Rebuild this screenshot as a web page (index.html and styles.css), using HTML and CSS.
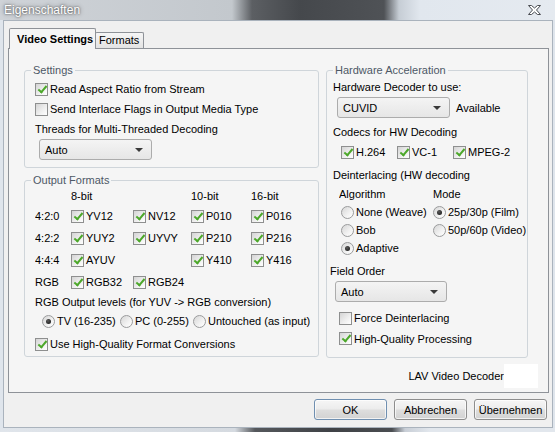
FILE: index.html
```html
<!DOCTYPE html>
<html lang="de">
<head>
<meta charset="utf-8">
<title>Eigenschaften</title>
<link rel="stylesheet" href="styles.css">
</head>
<body>
<div class="window">
  <div class="titlebar">
    <span class="title">Eigenschaften</span>
    <svg class="close" viewBox="0 0 13 10" width="13" height="10"><polygon points="0.5,0.5 3.5,0.5 6.5,3 9.5,0.5 12.5,0.5 8.5,5 12.5,9.5 9.5,9.5 6.5,7 3.5,9.5 0.5,9.5 4.5,5" fill="#fff" stroke="#4a4d52" stroke-width="1" stroke-linejoin="round"/></svg>
  </div>
  <div class="client">
    <div class="tabs">
      <div class="tab active">Video Settings</div>
      <div class="tab">Formats</div>
    </div>
    <div class="panel">
      <div class="cols">
        <div class="col">
          <fieldset class="group">
            <legend>Settings</legend>
            <div class="gbody settings">
              <div class="row"><span class="cb on"></span><span>Read Aspect Ratio from Stream</span></div>
              <div class="row"><span class="cb"></span><span>Send Interlace Flags in Output Media Type</span></div>
              <div class="row threads">Threads for Multi-Threaded Decoding</div>
              <div class="combo threads-combo"><span>Auto</span><span class="arrow"></span></div>
            </div>
          </fieldset>
          <fieldset class="group output">
            <legend>Output Formats</legend>
            <div class="gbody formats">
              <div class="fmt">
                <span></span><span class="cell">8-bit</span><span></span><span class="cell">10-bit</span><span class="cell">16-bit</span>
                <span class="cell">4:2:0</span>
                <span class="cell"><span class="cb on"></span>YV12</span>
                <span class="cell"><span class="cb on"></span>NV12</span>
                <span class="cell"><span class="cb on"></span>P010</span>
                <span class="cell"><span class="cb on"></span>P016</span>
                <span class="cell">4:2:2</span>
                <span class="cell"><span class="cb on"></span>YUY2</span>
                <span class="cell"><span class="cb on"></span>UYVY</span>
                <span class="cell"><span class="cb on"></span>P210</span>
                <span class="cell"><span class="cb on"></span>P216</span>
                <span class="cell">4:4:4</span>
                <span class="cell"><span class="cb on"></span>AYUV</span>
                <span></span>
                <span class="cell"><span class="cb on"></span>Y410</span>
                <span class="cell"><span class="cb on"></span>Y416</span>
                <span class="cell">RGB</span>
                <span class="cell"><span class="cb on"></span>RGB32</span>
                <span class="cell"><span class="cb on"></span>RGB24</span>
                <span></span><span></span>
              </div>
              <div class="row levels">RGB Output levels (for YUV -&gt; RGB conversion)</div>
              <div class="radios">
                <span class="ritem tv"><span class="rb on"></span>TV (16-235)</span>
                <span class="ritem pc"><span class="rb"></span>PC (0-255)</span>
                <span class="ritem"><span class="rb"></span>Untouched (as input)</span>
              </div>
              <div class="row hqconv"><span class="cb on"></span><span>Use High-Quality Format Conversions</span></div>
            </div>
          </fieldset>
        </div>
        <fieldset class="group hw">
          <legend>Hardware Acceleration</legend>
          <div class="gbody hwbody">
            <div class="row">Hardware Decoder to use:</div>
            <div class="decrow"><div class="combo cuvid"><span>CUVID</span><span class="arrow"></span></div><span class="avail">Available</span></div>
            <div class="row codecs-label">Codecs for HW Decoding</div>
            <div class="codecs">
              <span class="cell"><span class="cb on"></span>H.264</span>
              <span class="cell"><span class="cb on"></span>VC-1</span>
              <span class="cell"><span class="cb on"></span>MPEG-2</span>
            </div>
            <div class="row deint">Deinterlacing (HW decoding</div>
            <div class="algrow"><span class="cell">Algorithm</span><span class="cell">Mode</span></div>
            <div class="rrow"><span class="cell"><span class="rb"></span>None (Weave)</span><span class="cell"><span class="rb on"></span>25p/30p (Film)</span></div>
            <div class="rrow"><span class="cell"><span class="rb"></span>Bob</span><span class="cell"><span class="rb"></span>50p/60p (Video)</span></div>
            <div class="rrow"><span class="cell"><span class="rb on"></span>Adaptive</span><span></span></div>
            <div class="row field">Field Order</div>
            <div class="combo fieldcombo"><span>Auto</span><span class="arrow"></span></div>
            <div class="row force"><span class="cb"></span><span>Force Deinterlacing</span></div>
            <div class="row hqproc"><span class="cb on"></span><span>High-Quality Processing</span></div>
          </div>
        </fieldset>
      </div>
      <div class="lavrow"><span>LAV Video Decoder</span><span class="logo"></span></div>
    </div>
    <div class="buttons">
      <span class="btn default">OK</span>
      <span class="btn">Abbrechen</span>
      <span class="btn">Übernehmen</span>
    </div>
  </div>
  <div class="bottom"></div>
</div>
</body>
</html>
```

FILE: styles.css
```css
* { box-sizing: border-box; }
html, body { margin: 0; padding: 0; }
body {
  width: 555px;
  height: 432px;
  overflow: hidden;
  font-family: "Liberation Sans", Arial, sans-serif;
  font-size: 11px;
  color: #000;
  background: #dfe5ec;
}
.window {
  width: 555px;
  height: 432px;
  display: flex;
  flex-direction: column;
}
.titlebar {
  height: 20px;
  flex: none;
  display: flex;
  align-items: center;
  justify-content: space-between;
  padding: 0 14px 0 4px;
  background: linear-gradient(90deg, #cfd3d8 0, #c3c8cd 232px, #5c5f63 252px, #45484c 300px, #4f5256 384px, #c6cdd5 399px, #e1e7ee 420px, #e5eaf0 100%);
}
.title {
  font-size: 12px;
  color: #fff;
  text-shadow: 0 0 2px #4a4a4a, 0 0 5px rgba(0,0,0,0.45);
}
.close { display: block; }
.client {
  margin-left: 3px;
  width: 550px;
  height: 408px;
  flex: none;
  border: 1px solid #aab3bd;
  background: #f0f0f0;
  padding: 7px 3px 0 4px;
}
.bottom {
  flex: 1;
  background: linear-gradient(90deg, #e0e5eb 0, #d5dae0 235px, #55585c 255px, #3f4246 330px, #4a4d51 392px, #c8ced6 405px, #e2e7ed 430px, #e2e7ed 100%);
}
.tabs {
  display: flex;
  align-items: flex-end;
  height: 20px;
  padding-left: 1px;
}
.tab {
  height: 16px;
  border: 1px solid #8e9298;
  border-bottom: none;
  border-radius: 2px 2px 0 0;
  padding: 0 4px 0 3px;
  line-height: 15px;
  background: linear-gradient(#f6f6f6, #e3e3e3);
  margin-left: -1px;
  white-space: nowrap;
}
.tab.active {
  position: relative;
  z-index: 1;
  height: 21px;
  width: 87px;
  margin-left: 0;
  margin-bottom: -1px;
  padding: 0 0 0 7px;
  line-height: 20px;
  font-weight: bold;
  background: #f5f5f5;
}
.panel {
  width: 541px;
  height: 345px;
  border: 1px solid #8e9298;
  background: #f5f5f5;
  padding: 15px 0 0 15px;
}
.cols {
  display: grid;
  grid-template-columns: 295px 202px;
  column-gap: 7px;
  align-items: start;
}
fieldset.group {
  margin: 0;
  padding: 0;
  min-width: 0;
  border: 1px solid #cfd5da;
  border-radius: 3px;
}
fieldset.group.output { margin-top: 6px; }
legend {
  margin-left: 6px;
  padding: 0 2px;
  line-height: 13px;
  color: #4d5866;
}
.row {
  height: 20px;
  display: flex;
  align-items: center;
  white-space: nowrap;
}
.cell {
  display: flex;
  align-items: center;
  white-space: nowrap;
  overflow: hidden;
}
.cb {
  flex: none;
  width: 13px;
  height: 13px;
  border: 1px solid #8e8f8f;
  background: linear-gradient(135deg, #d4d4d4 0%, #eeeeee 55%, #ffffff 100%);
  margin-right: 2px;
}
.cb.on::after {
  content: "";
  display: block;
  width: 3px;
  height: 7px;
  border: solid #4ca82a;
  border-width: 0 2px 2px 0;
  transform: rotate(40deg);
  margin: 0 0 0 4px;
}
.rb {
  flex: none;
  width: 13px;
  height: 13px;
  border-radius: 50%;
  border: 1px solid #9a9b9c;
  background: linear-gradient(135deg, #d6d6d6 0%, #f2f2f2 60%, #ffffff 100%);
  margin-right: 2px;
}
.rb.on::after {
  content: "";
  display: block;
  width: 5px;
  height: 5px;
  margin: 3px;
  border-radius: 50%;
  background: radial-gradient(circle at 40% 35%, #5a5a5a, #111);
}
.combo {
  display: flex;
  align-items: center;
  justify-content: space-between;
  height: 21px;
  border: 1px solid #acacac;
  border-radius: 3px;
  background: linear-gradient(#f4f4f4, #e6e6e6);
  padding: 0 8px 0 5px;
}
.arrow {
  width: 0;
  height: 0;
  border-left: 4px solid transparent;
  border-right: 4px solid transparent;
  border-top: 4px solid #3a3a3a;
}
/* Settings */
.settings { padding: 2px 0 7px 10px; }
.threads { height: 19px; }
.threads-combo { width: 113px; margin: 1px 0 0 4px; }
/* Output formats */
.formats { padding: 0 0 2px 10px; }
.fmt {
  display: grid;
  grid-template-columns: 36px 62px 58px 60px 1fr;
  grid-template-rows: 18px repeat(4, 22px);
}
.levels { height: 18px; }
.radios {
  display: flex;
  align-items: center;
  height: 20px;
  padding-left: 7px;
}
.ritem {
  display: flex;
  align-items: center;
  white-space: nowrap;
  overflow: hidden;
}
.ritem.tv { width: 78px; flex: none; }
.ritem.pc { width: 73px; flex: none; }
.hqconv { margin-top: 3px; }
/* Hardware */
.hwbody { padding: 0 0 8px 6px; }
.decrow { display: flex; align-items: center; height: 21px; }
.cuvid { width: 113px; margin-left: 4px; }
.avail { margin-left: 6px; }
.codecs-label { margin-top: 4px; }
.codecs {
  display: grid;
  grid-template-columns: 56px 56px 1fr;
  height: 20px;
  padding-left: 8px;
}
.deint { margin-top: 3px; }
.algrow {
  display: grid;
  grid-template-columns: 94px 86px;
  height: 18px;
  padding-left: 6px;
}
.rrow {
  display: grid;
  grid-template-columns: 92px 93px;
  height: 18px;
  padding-left: 8px;
}
.field { margin: 4px 0 0 -3px; }
.fieldcombo { width: 112px; margin-left: 2px; }
.force { margin: 6px 0 0 6px; }
.hqproc { height: 21px; margin-left: 6px; }
/* LAV row */
.lavrow {
  display: flex;
  justify-content: flex-end;
  align-items: center;
  height: 24px;
  margin: 6px 10px 0 0;
}
.logo {
  width: 34px;
  height: 24px;
  background: #fff;
}
/* Buttons */
.buttons {
  display: flex;
  justify-content: flex-end;
  gap: 7px;
  margin: 6px 2px 0 0;
}
.btn {
  width: 73px;
  height: 21px;
  display: flex;
  align-items: center;
  justify-content: center;
  border: 1px solid #8d8d8d;
  border-radius: 3px;
  background: linear-gradient(#f6f6f6 0%, #ececec 48%, #dedede 52%, #d2d2d2 100%);
  box-shadow: inset 0 0 0 1px rgba(255,255,255,0.7);
}
.btn.default {
  border-color: #6f8fb0;
}
```
